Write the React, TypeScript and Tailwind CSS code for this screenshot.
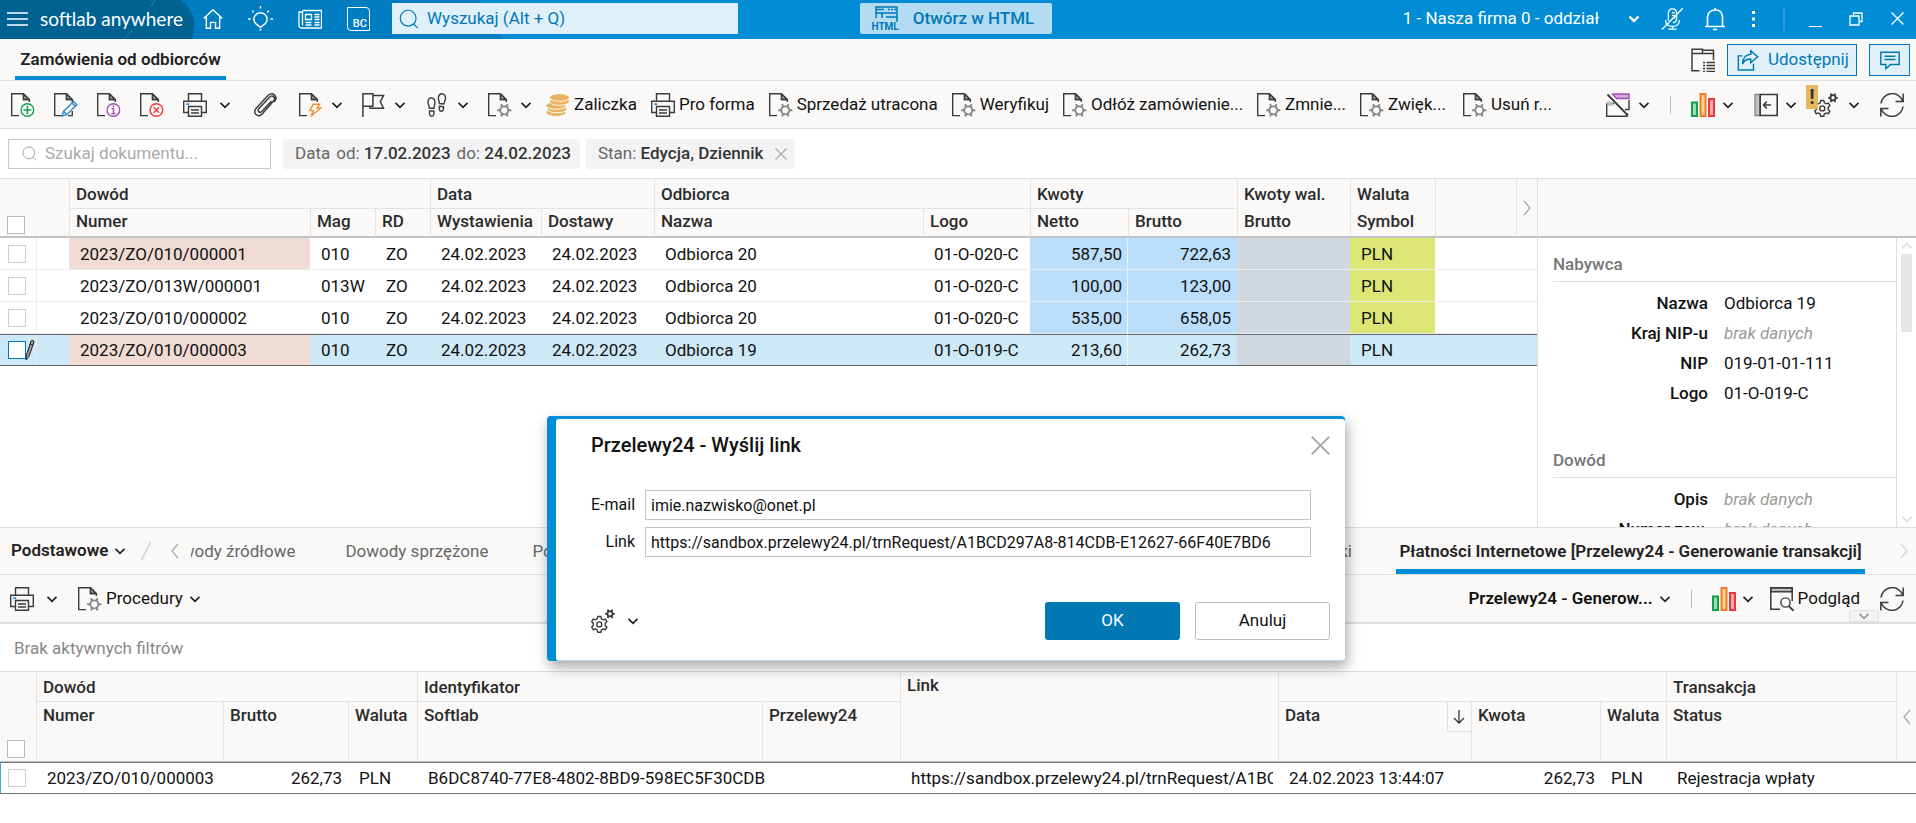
import React, { useState } from "react";

interface IconProps {
  children: React.ReactNode;
  size?: string;
  color?: string;
}

const Icon = ({ children, size = "w-6 h-6", color = "text-[#3b3b3b]" }: IconProps) => (
  <svg
    viewBox="0 0 24 24"
    className={`${size} ${color} shrink-0`}
    fill="none"
    stroke="currentColor"
    strokeWidth="1.4"
    aria-hidden="true"
  >
    {children}
  </svg>
);

const Chevron = ({ color = "text-[#222]" }: { color?: string }) => (
  <svg viewBox="0 0 12 12" className={`w-3 h-3 shrink-0 ${color}`} fill="none" stroke="currentColor" strokeWidth="1.7" aria-hidden="true">
    <path d="M1.5 3.8 6 8.3 10.5 3.8" />
  </svg>
);

const Angle = ({ left }: { left?: boolean }) => (
  <svg viewBox="0 0 8 16" className="w-2 h-4 shrink-0 text-[#aaa]" fill="none" stroke="currentColor" strokeWidth="1.3" aria-hidden="true">
    <path d={left ? "M7 1 1 8 7 15" : "M1 1 7 8 1 15"} />
  </svg>
);

const Page = ({ children }: { children?: React.ReactNode }) => (
  <Icon>
    <path d="M8 22.6H.7V.7H12.5M12.5.7 18.3 6.5V9M12.5.7V6.5H18.3" />
    <path d="M12.5 1 18 6.5H12.5Z" fill="currentColor" fillOpacity=".35" />
    {children}
  </Icon>
);

const DocAdd = () => (
  <Page>
    <circle cx="16.4" cy="17" r="6.3" stroke="#12a150" />
    <path d="M16.4 13v8M12.4 17h8" stroke="#12a150" strokeWidth="1.6" />
  </Page>
);

const DocEdit = () => (
  <Page>
    <path d="M8.2 23 9.5 18.4 19.5 8.4 22.8 11.7 12.8 21.7ZM18 10l3.3 3.3M9.6 18.4l3.2 3.2" stroke="#2a8ad4" />
    <path d="M18.3 18v4.6H14" />
  </Page>
);

const DocInfo = () => (
  <Page>
    <circle cx="16.4" cy="17" r="6.3" stroke="#a04fb0" />
    <path d="M14.6 15.6h1.9v4.8M14.4 20.6h4.2" stroke="#a04fb0" />
    <circle cx="16.4" cy="13.2" r=".9" fill="#a04fb0" stroke="none" />
  </Page>
);

const DocDelete = () => (
  <Page>
    <circle cx="16.4" cy="17" r="6.3" stroke="#e83a3a" />
    <path d="m13.7 14.3 5.4 5.4M19.1 14.3l-5.4 5.4" stroke="#e83a3a" />
  </Page>
);

const DocFlash = () => (
  <Page>
    <path d="M14.2 11.2h6.5L18.2 15h3.4L12 23.2l2.4-5.6H10.8Z" stroke="#f08c33" />
  </Page>
);

const DocGear = () => (
  <Page>
    <circle cx="16.3" cy="17.3" r="4" stroke="#858585" strokeWidth="1.8" />
    <path
      d="M14.2 13.6 13 11.2M18.4 13.6l1.2-2.4M14.2 21 13 23.4M18.4 21l1.2 2.4M12.2 17.3H9.2M20.4 17.3h3"
      stroke="#858585"
      strokeWidth="2"
    />
  </Page>
);

const Printer = () => (
  <Icon>
    <path d="M5.5 8V.7h13V8M5 19.5H.7V8.2h22.6v11.3H19" />
    <path d="M5.5 13.5h13v9.8h-13ZM8 17h8M8 20h8" />
    <path d="M3.2 11.2h3" stroke="#2a8ad4" strokeWidth="1.8" />
  </Icon>
);

const Clip = () => (
  <Icon>
    <path
      d="m18 8.500-9.200 9.900c-2 2.100-5-.6-3-2.700L16.500 4.300c3-3 6.800.6 4 3.700L9.400 20.800c-4.600 4.700-10.600-.8-6.200-5.600L15 2.500c4.600-4.200 10.600 1 6.400 6"
      strokeWidth="1.5"
      strokeLinecap="round"
    />
  </Icon>
);

const Flag = () => (
  <Icon>
    <path d="M.9 24V.7h10v12.6H.9M10.900 2.600h10.600l-3.200 6.200 3.200 6.400H8V13.300" strokeWidth="1.5" />
  </Icon>
);

const Feet = () => (
  <Icon>
    <path d="M6.4 5c2.400 0 3.700 1.900 3.500 4.600-.1 2-.8 3.300-.9 5.600l-4.600.1C4.300 13 3 11.500 3 9 3 6.600 4.200 5 6.400 5Z" />
    <path d="M4.600 18h4.300c.5 3.400-.6 5.300-2.200 5.300S4 21.500 4.600 18Z" />
    <path d="M17 .8c2.300 0 3.700 1.900 3.500 4.600-.1 2.400-1.400 3.400-1.600 5.600l-4.500-.5c0-2-1-3.200-1-5.400C13.400 2.600 14.700.8 17 .8Z" />
    <path d="M14.400 13.200l4.200.5c.1 3.200-1 4.800-2.500 4.600-1.600-.2-2.200-2.200-1.700-5.100Z" />
  </Icon>
);

const Coins = () => (
  <Icon color="text-[#e9b35b]">
    <g fill="currentColor" stroke="#faf9f8" strokeWidth="1">
      <ellipse cx="10" cy="19.500" rx="10" ry="4" />
      <ellipse cx="11" cy="16" rx="10" ry="3.800" />
      <ellipse cx="10" cy="12.500" rx="10" ry="3.800" />
      <ellipse cx="13.500" cy="8.500" rx="10" ry="3.800" />
      <ellipse cx="13.500" cy="4.500" rx="10" ry="3.800" />
    </g>
  </Icon>
);

const Bars = () => (
  <Icon>
    <rect x="1" y="9.500" width="5" height="13.500" fill="#9fdcb4" stroke="#12a150" strokeWidth="2" />
    <rect x="9.500" y="1" width="5" height="22" fill="#fbd38d" stroke="#ee7d2b" strokeWidth="2" />
    <rect x="18" y="6" width="5" height="17" fill="#f4a9b0" stroke="#e83a3a" strokeWidth="2" />
  </Icon>
);

const Refresh = () => (
  <Icon>
    <path d="M1 10.500A11.200 11.200 0 0 1 22.500 7.500M23.200.5v8H15.500M23 13.500A11.200 11.200 0 0 1 1.500 16.500M.8 23.500v-8H8.500" strokeWidth="1.500" />
  </Icon>
);

const Gears = () => (
  <Icon>
    <path d="m6.800 7.500 3 0 .6 2.300 1.700 1 2.300-.7 1.500 2.600-1.700 1.700v2l1.700 1.700-1.500 2.600-2.300-.7-1.700 1-.6 2.300h-3L6.200 21l-1.700-1-2.300.7L.7 18.100l1.700-1.700v-2L.7 12.700l1.500-2.600 2.300.7 1.700-1Z" />
    <circle cx="8.300" cy="15.400" r="2.500" />
    <circle cx="19" cy="4.800" r="2.600" strokeWidth="1.800" />
    <path d="M17.500 2.500 16.700.5M20.500 2.500l.8-2M17.500 7.200l-.8 2M20.500 7.200l.8 2M16.200 4.800h-2M21.800 4.800h2" strokeWidth="1.800" />
  </Icon>
);

const FilterOff = () => (
  <Icon>
    <path d="M6.500 1H23v4.500H10.500Z" fill="#d6a3da" stroke="#a04fb0" />
    <path d="M23 7v9.500H19M.7 10.500V23.300H21V20M.7 10.500H8" />
    <path d="M1 8.500h4l3.500 4H1Z" fill="#bbb" stroke="none" />
    <path d="m1.500 1.500 20.500 21" strokeWidth="1.800" />
  </Icon>
);

const PanelLeft = () => (
  <Icon>
    <path d="M1 1.500h5v21H1Z" fill="#c4c4c4" stroke="#8a8a8a" />
    <path d="M6.200 1.500H23.200v21H6.200ZM9.500 12h7.500M12.800 8.600 9.500 12l3.300 3.400" strokeWidth="1.600" />
  </Icon>
);

const ListWindow = () => (
  <Icon>
    <path d="M8.500 22.800H1V1.200H11.500V5.500H1M11.500 2.200h11V12M11.500 5.500h11" strokeWidth="1.500" />
    <path d="M12 14.500h2M12 17.500h2M12 20.500h2M12 23.500h2M15.500 14.500h8.500M15.500 17.500h8.500M15.500 20.500h8.500M15.500 23.500h8.500" />
  </Icon>
);

const Preview = () => (
  <Icon>
    <path d="M10 22.300H.8V.8h21.400V14" strokeWidth="1.500" />
    <path d="M1 1h21v3.800H1Z" fill="#bbb" stroke="#3b3b3b" />
    <circle cx="15.500" cy="15.500" r="4.600" />
    <path d="m18.700 19 5 5" strokeWidth="1.800" />
  </Icon>
);

const Share = () => (
  <Icon color="text-[#0078b8]" size="w-[22px] h-[22px]">
    <path
      d="M6 7.500H1.500v15.500H18V16M15 2l7.500 6.500L15 15v-4c-4.500-.2-7.300 1.800-9 5.500.2-6.600 3.300-10.300 9-10.700Z"
      strokeWidth="1.600"
    />
  </Icon>
);

const Comment = () => (
  <Icon color="text-[#0078b8]" size="w-[22px] h-[22px]">
    <path d="M2 3.500h20v13.500H12.500L7.500 21.500V17H2ZM6 8h12M6 11.500h12" strokeWidth="1.600" />
  </Icon>
);

const Search = ({ size, color }: { size: string; color: string }) => (
  <Icon size={size} color={color}>
    <circle cx="11" cy="11" r="9.500" />
    <path d="m17.500 18 5 5" />
  </Icon>
);

const Cross = ({ size = "w-3 h-3", color }: { size?: string; color: string }) => (
  <Icon size={size} color={color}>
    <path d="M1 1 23 23M23 1 1 23" strokeWidth="2.400" />
  </Icon>
);

const box = "block appearance-none w-[18px] h-[18px] bg-white border";

const TitleBar = () => (
  <header className="relative flex h-[39px] shrink-0 items-center overflow-hidden bg-[#008dd5] pb-[2px] text-white">
    <svg className="absolute left-0 top-0 h-[39px] w-[640px]" viewBox="0 0 640 39" aria-hidden="true">
      <path d="M0 0H480Q488 20 503 39H0Z" fill="#007dc0" />
      <path d="M0 0H182Q200 19 192 39H0Z" fill="#006193" />
      <path d="m155 0-4 6M132 31l-8 8" stroke="#3d7ea2" />
    </svg>
    <div className="relative flex flex-1 items-center pl-[7px]">
      <button aria-label="Menu" className="mr-3">
        <svg viewBox="0 0 21 14" className="h-[14px] w-[21px]" stroke="white" strokeWidth="1.300" aria-hidden="true">
          <path d="M0 1h21M0 7h21M0 13h21" />
        </svg>
      </button>
      <span className="w-[163px] font-[Lato,sans-serif] text-[19px] leading-none">softlab anywhere</span>
      <nav className="flex items-center gap-[25px] pr-[22px]">
        <button aria-label="Start">
          <Icon size="w-5 h-5" color="text-white">
            <path d="M.8 11.500 12 1l11.200 10.500M4 9v14h5v-7h6v7h5V9" strokeWidth="1.700" />
          </Icon>
        </button>
        <button aria-label="Podpowiedzi">
          <Icon size="w-[25px] h-[25px]" color="text-white">
            <path d="M9.500 18.500a6.300 6.300 0 1 1 5 0L12 20.500ZM12 0v2.500M4 4.500l1.500 1.500M20 4.500 18.500 6M0 12.500h2.500M21.500 12.500H24" />
            <circle cx="12" cy="22.800" r=".9" fill="currentColor" stroke="none" />
          </Icon>
        </button>
        <button aria-label="Aktualności">
          <Icon size="w-[24px] h-[24px]" color="text-white">
            <path d="M4.500 3.500h19v17.500H3.500Q1 21 1 18.500V5h3.500v13.500M7.500 7.500h6v5h-6ZM16.500 7.500h5M16.500 10h5M16.500 12.500h5M7.500 15.500h6M16.500 15.500h5M7.500 18h6M16.500 18h5" strokeWidth="1.300" />
          </Icon>
        </button>
        <button aria-label="BC" className="flex h-6 w-[23px] items-end justify-end rounded-bl-[4px] rounded-tr-[4px] border border-white text-[11px] font-medium leading-none">
          <span className="px-[2px] py-px">BC</span>
        </button>
      </nav>
      <label className="flex h-[31px] w-[346px] items-center gap-2 bg-[#e0f0f9] pl-[7px]">
        <Search size="w-5 h-5" color="text-[#0078b8]" />
        <input
          type="text"
          aria-label="Wyszukaj"
          placeholder="Wyszukaj (Alt + Q)"
          className="w-full bg-transparent text-[17px] text-[#0078b8] outline-none placeholder:text-[#0078b8]"
        />
      </label>
    </div>
    <button className="relative flex h-[31px] w-[192px] items-center gap-[14px] rounded-[2px] bg-[#b3dcf2] pl-3 text-[17px] font-medium text-[#0078b8]">
      <span className="flex flex-col items-center">
        <svg viewBox="0 0 26 16" className="h-4 w-[26px]" fill="none" stroke="currentColor" strokeWidth="1.500" aria-hidden="true">
          <path d="M4 12V1h21v15M4 7h21M10 7v5M14 11h11M4 3.500h8M16 3.500h2M19 3.500h2M22 3.500h2" />
        </svg>
        <span className="text-[10px] font-bold leading-[9px]">HTML</span>
      </span>
      Otwórz w HTML
    </button>
    <div className="flex flex-1 items-center justify-end pr-3">
      <button className="flex items-center gap-[29px] text-[17px]">
        1 - Nasza firma 0 - oddział
        <svg viewBox="0 0 12 12" className="h-3 w-3" fill="none" stroke="currentColor" strokeWidth="2.400" aria-hidden="true">
          <path d="M1.500 3.500 6 8 10.500 3.500" />
        </svg>
      </button>
      <button aria-label="Mikrofon" className="ml-[21px]">
        <Icon size="w-[22px] h-[22px]" color="text-white">
          <path d="M8 14V6q0-5 4.500-5t4.500 5v5q0 5-4 5M5 13q0 7 7.500 7T20 13M12.500 20v3M8 23h9M24 0 1 23.500M12 5h3M12 8h3M12 11h3" />
        </Icon>
      </button>
      <button aria-label="Powiadomienia" className="ml-5">
        <Icon size="w-[24px] h-[24px]" color="text-white">
          <path d="M2 19.500h20M4.500 19.500V10Q5 3.500 12 3t7.500 7v9.500M12 3V1M10 22.500h4" strokeWidth="1.600" />
        </Icon>
      </button>
      <button aria-label="Więcej" className="ml-[14px] w-6">
        <svg viewBox="0 0 24 16" className="h-4 w-6" fill="white" aria-hidden="true">
          <path d="M11 0h3v3h-3ZM11 6.500h3v3h-3ZM11 13h3v3h-3Z" />
        </svg>
      </button>
      <span className="ml-[18px] h-6 w-[2px] bg-[#2b9fdc]" />
      <button aria-label="Minimalizuj" className="ml-6 h-4 w-[13px] border-b border-white" />
      <button aria-label="Przywróć" className="ml-[27px]">
        <svg viewBox="0 0 14 14" className="h-[14px] w-[14px]" fill="none" stroke="white" strokeWidth="1.300" aria-hidden="true">
          <path d="M1 4h9v9H1ZM4.500 4V1H13v8.500H10" />
        </svg>
      </button>
      <button aria-label="Zamknij program" className="ml-7">
        <Cross size="w-[13px] h-[13px]" color="text-white" />
      </button>
    </div>
  </header>
);

const TabBar = () => (
  <div className="flex h-[42px] shrink-0 items-center justify-between border-b border-[#e1e1e1] bg-[#faf9f8] pl-[15px] pr-[6px]">
    <button className="h-full w-[211px] border-b-4 border-[#008dd5] pt-1 text-[17px] font-semibold text-[#222]">
      Zamówienia od odbiorców
    </button>
    <div className="flex items-center gap-3">
      <button aria-label="Lista">
        <ListWindow />
      </button>
      <button className="flex h-8 w-[130px] items-center gap-[9px] border border-[#0078b8] bg-[#e0f0f9] pl-[9px] text-[17px] text-[#0078b8]">
        <Share />
        Udostępnij
      </button>
      <button aria-label="Komentarze" className="flex h-8 w-[41px] items-center justify-center border border-[#0078b8] bg-[#e0f0f9]">
        <Comment />
      </button>
    </div>
  </div>
);

interface Tool {
  name: string;
  icon: React.ReactNode;
  menu?: boolean;
  spacing?: string;
}

const tools: Tool[] = [
  { name: "Dodaj", icon: <DocAdd /> },
  { name: "Edytuj", icon: <DocEdit /> },
  { name: "Informacje", icon: <DocInfo /> },
  { name: "Usuń", icon: <DocDelete /> },
  { name: "Drukuj", icon: <Printer />, menu: true, spacing: "gap-3 pr-[3px]" },
  { name: "Załącz", icon: <Clip />, spacing: "pr-[3px]" },
  { name: "Akcje", icon: <DocFlash />, menu: true },
  { name: "Flaga", icon: <Flag />, menu: true },
  { name: "Ślady", icon: <Feet />, menu: true },
  { name: "Operacje", icon: <DocGear />, menu: true },
];

const actions = [
  { name: "Zaliczka", icon: <Coins />, width: "" },
  { name: "Pro forma", icon: <Printer />, width: "" },
  { name: "Sprzedaż utracona", icon: <DocGear />, width: "" },
  { name: "Weryfikuj", icon: <DocGear />, width: "" },
  { name: "Odłóż zamówienie...", icon: <DocGear />, width: "w-[180px]" },
  { name: "Zmnie...", icon: <DocGear />, width: "w-[89px]" },
  { name: "Zwięk...", icon: <DocGear />, width: "w-[89px]" },
  { name: "Usuń r...", icon: <DocGear />, width: "w-[89px]" },
];

const Toolbar = () => (
  <div className="flex h-12 shrink-0 items-center border-b border-[#dedede] bg-[#faf9f8] pl-[11px] pr-3 text-[17px] text-[#111]">
    <div className="flex items-center gap-[19px]">
      {tools.map((tool) => (
        <button key={tool.name} aria-label={tool.name} className={`flex items-center ${tool.spacing ?? "gap-2"}`}>
          {tool.icon}
          {tool.menu && <Chevron />}
        </button>
      ))}
    </div>
    <div className="ml-[14px] flex flex-1 items-center gap-[14px]">
      {actions.map((action) => (
        <button key={action.name} className={`flex items-center gap-1 whitespace-nowrap ${action.width}`}>
          {action.icon}
          {action.name}
        </button>
      ))}
    </div>
    <div className="flex items-center gap-5">
      <button aria-label="Wyłącz filtr" className="flex items-center gap-2">
        <FilterOff />
        <Chevron />
      </button>
      <span className="h-[18px] w-px bg-[#bbb]" />
      <button aria-label="Wykresy" className="flex items-center gap-[7px]">
        <Bars />
        <Chevron />
      </button>
      <button aria-label="Panel" className="flex items-center gap-[7px]">
        <PanelLeft />
        <Chevron />
      </button>
      <button aria-label="Ustawienia" className="relative -ml-[3px] flex items-center gap-[10px]">
        <Gears />
        <Chevron />
        <span className="absolute -left-2 -top-2 flex h-6 w-3 items-center justify-center bg-[#e5b85c] text-[20px] font-bold leading-none text-[#333]">
          !
        </span>
      </button>
      <button aria-label="Odśwież">
        <Refresh />
      </button>
    </div>
  </div>
);

const FilterRow = () => {
  const [query, setQuery] = useState("");

  return (
    <div className="flex h-[50px] shrink-0 items-center gap-[6px] border-b border-[#dedede] bg-white pl-2 text-[17px] text-[#666]">
      <label className="mr-[6px] flex h-[30px] w-[263px] items-center gap-2 border border-[#c8c8c8] pl-[13px]">
        <Search size="w-[15px] h-[15px]" color="text-[#999]" />
        <input
          type="text"
          aria-label="Szukaj dokumentu"
          placeholder="Szukaj dokumentu..."
          value={query}
          onChange={(event) => setQuery(event.target.value)}
          className="w-full bg-transparent outline-none placeholder:text-[#aaa]"
        />
      </label>
      <button className="flex h-[30px] items-center gap-[6px] rounded-[3px] bg-[#f3f3f3] pl-3 pr-[9px]">
        <span>Data</span>
        <span>
          od: <b className="font-medium text-[#333]">17.02.2023</b>
        </span>
        <span>
          do: <b className="font-medium text-[#333]">24.02.2023</b>
        </span>
      </button>
      <button className="flex h-[30px] items-center gap-3 rounded-[3px] bg-[#f3f3f3] pl-3 pr-2">
        <span>
          Stan: <b className="font-medium text-[#333]">Edycja, Dziennik</b>
        </span>
        <Cross color="text-[#aaa]" />
      </button>
    </div>
  );
};

interface Order {
  number: string;
  store: string;
  client: string;
  logo: string;
  net: string;
  gross: string;
  marked: boolean;
}

const orders: Order[] = [
  { number: "2023/ZO/010/000001", store: "010", client: "Odbiorca 20", logo: "01-O-020-C", net: "587,50", gross: "722,63", marked: true },
  { number: "2023/ZO/013W/000001", store: "013W", client: "Odbiorca 20", logo: "01-O-020-C", net: "100,00", gross: "123,00", marked: false },
  { number: "2023/ZO/010/000002", store: "010", client: "Odbiorca 20", logo: "01-O-020-C", net: "535,00", gross: "658,05", marked: false },
  { number: "2023/ZO/010/000003", store: "010", client: "Odbiorca 19", logo: "01-O-019-C", net: "213,60", gross: "262,73", marked: true },
];

const groupHead = "border-b border-l border-[#e3e3e3] pl-[6px] font-medium";
const openHead = "border-l border-[#e3e3e3] pl-[6px] font-medium";
const subHead = "border-b-2 border-b-[#c2c2c2] border-l border-l-[#e3e3e3] pl-[6px] pb-1 font-medium";

const OrdersTable = () => {
  const [selected, setSelected] = useState(3);

  return (
    <table className="w-full table-fixed border-separate border-spacing-0 text-left text-[17px] leading-5 text-[#111]">
      <colgroup>
        <col className="w-[36px]" />
        <col className="w-[33px]" />
        <col className="w-[241px]" />
        <col className="w-[65px]" />
        <col className="w-[55px]" />
        <col className="w-[111px]" />
        <col className="w-[113px]" />
        <col />
        <col className="w-[107px]" />
        <col className="w-[98px]" />
        <col className="w-[109px]" />
        <col className="w-[113px]" />
        <col className="w-[85px]" />
        <col className="w-[81px]" />
        <col className="w-[21px]" />
      </colgroup>
      <thead className="bg-[#faf9f8] text-[#2b2b2b]">
        <tr className="h-[30px]">
          <th rowSpan={2} colSpan={2} className="border-b-2 border-[#c2c2c2] pb-[2px] pl-[7px] align-bottom">
            <input type="checkbox" aria-label="Zaznacz wszystkie" className={`${box} border-[#bbb]`} />
          </th>
          <th colSpan={3} className={groupHead}>Dowód</th>
          <th colSpan={2} className={groupHead}>Data</th>
          <th colSpan={2} className={groupHead}>Odbiorca</th>
          <th colSpan={2} className={groupHead}>Kwoty</th>
          <th className={openHead}>Kwoty wal.</th>
          <th className={openHead}>Waluta</th>
          <th rowSpan={2} className={subHead} />
          <th rowSpan={2} className="border-b-2 border-b-[#c2c2c2] border-l border-l-[#e3e3e3]">
            <button aria-label="Dalej" className="flex w-full justify-center">
              <Angle />
            </button>
          </th>
        </tr>
        <tr className="h-[29px]">
          <th className={subHead}>Numer</th>
          <th className={subHead}>Mag</th>
          <th className={subHead}>RD</th>
          <th className={subHead}>Wystawienia</th>
          <th className={subHead}>Dostawy</th>
          <th className={subHead}>Nazwa</th>
          <th className={subHead}>Logo</th>
          <th className={subHead}>Netto</th>
          <th className={subHead}>Brutto</th>
          <th className={subHead}>Brutto</th>
          <th className={subHead}>Symbol</th>
        </tr>
      </thead>
      <tbody>
        {orders.map((order, index) => {
          const active = index === selected;
          const edge = active ? "border-y border-[#666]" : "border-b border-[#ececec]";
          const amount = active ? "" : "bg-[#bbdefb]";
          return (
            <tr key={order.number} onClick={() => setSelected(index)} className={active ? "h-8 bg-[#cde8f6]" : "h-8"}>
              <td className={`${edge} pl-2`}>
                <span className="relative block">
                  <input
                    type="checkbox"
                    aria-label={order.number}
                    className={`${box} ${active ? "border-[#0078b8]" : "border-[#ccc]"}`}
                  />
                  {active && (
                    <svg viewBox="0 0 10 22" className="absolute -top-[2px] left-[17px] h-[22px] w-[10px]" fill="#999" stroke="#222" aria-hidden="true">
                      <path d="M6 2Q8.500 0 9 3L4 17.500 1 21 1.500 16ZM5 5l3 1" />
                    </svg>
                  )}
                </span>
              </td>
              <td className={`${edge} relative`}>
                <span className="absolute inset-y-0 left-0 w-px bg-[#ececec]" />
              </td>
              <td className={`${edge} pl-[11px] ${order.marked ? "bg-[#f0dbd5]" : ""}`}>{order.number}</td>
              <td className={`${edge} pl-[11px]`}>{order.store}</td>
              <td className={`${edge} pl-[11px]`}>ZO</td>
              <td className={`${edge} pl-[11px]`}>24.02.2023</td>
              <td className={`${edge} pl-[11px]`}>24.02.2023</td>
              <td className={`${edge} pl-[11px]`}>{order.client}</td>
              <td className={`${edge} pl-[11px]`}>{order.logo}</td>
              <td className={`${edge} border-r border-r-white/60 pr-[5px] text-right ${amount}`}>{order.net}</td>
              <td className={`${edge} pr-[6px] text-right ${amount}`}>{order.gross}</td>
              <td className={`${edge} bg-[#d0d8df]`} />
              <td className={`${edge} pl-[11px] ${active ? "" : "bg-[#dce775]"}`}>PLN</td>
              <td colSpan={2} className={edge} />
            </tr>
          );
        })}
      </tbody>
    </table>
  );
};

const details = [
  {
    title: "Nabywca",
    rows: [
      ["Nazwa", "Odbiorca 19"],
      ["Kraj NIP-u", ""],
      ["NIP", "019-01-01-111"],
      ["Logo", "01-O-019-C"],
    ],
  },
  {
    title: "Dowód",
    rows: [
      ["Opis", ""],
      ["Numer zew.", ""],
    ],
  },
];

const DetailsPanel = () => (
  <aside className="flex w-[379px] shrink-0 flex-col border-l border-[#dedede] text-[17px] text-[#111]">
    <div className="h-[59px] shrink-0 border-b-2 border-[#c2c2c2] bg-[#faf9f8]" />
    <div className="flex min-h-0 flex-1">
      <div className="flex flex-1 flex-col gap-[26px] overflow-hidden pl-[15px]">
        {details.map((section) => (
          <section key={section.title} className="shrink-0">
            <h2 className="h-[44px] border-b border-[#dedede] pt-4 leading-5 font-medium text-[#777]">{section.title}</h2>
            <dl className="grid grid-cols-[155px_1fr] gap-x-4 pt-[6px] leading-[30px]">
              {section.rows.map(([label, value]) => (
                <React.Fragment key={label}>
                  <dt className="text-right font-medium">{label}</dt>
                  <dd>{value || <i className="text-[#999]">brak danych</i>}</dd>
                </React.Fragment>
              ))}
            </dl>
          </section>
        ))}
      </div>
      <div className="flex w-5 flex-col items-center border-l border-[#dedede] py-[2px]">
        <span className="rotate-180">
          <Chevron color="text-[#ddd]" />
        </span>
        <span className="mt-[2px] h-[78px] w-[11px] bg-[#e6e6e6]" />
        <span className="mt-auto">
          <Chevron color="text-[#ddd]" />
        </span>
      </div>
    </div>
  </aside>
);

const BottomTabs = () => (
  <div className="flex h-[48px] shrink-0 items-center border-y border-[#dedede] bg-[#faf9f8] pl-[11px] pr-2 text-[17px] text-[#666]">
    <button className="flex items-center gap-[6px] font-semibold text-[#222]">
      Podstawowe
      <Chevron />
    </button>
    <svg viewBox="0 0 10 18" className="ml-[15px] h-[18px] w-[10px]" stroke="#ccc" strokeWidth="1.300" aria-hidden="true">
      <path d="M9.500 0 .5 18" />
    </svg>
    <button aria-label="Poprzednie" className="ml-5 mr-3">
      <Angle left />
    </button>
    <nav className="flex h-full flex-1 items-center whitespace-nowrap">
      <button className="flex w-[104px] justify-end overflow-hidden pt-[2px]">Dowody źródłowe</button>
      <button className="ml-[50px] pt-[2px]">Dowody sprzężone</button>
      <button className="ml-[44px] pt-[2px]">Pozycje</button>
      <button className="ml-auto mr-[44px] pt-[2px]">Załączniki</button>
      <button className="h-full w-[469px] border-b-[5px] border-[#008dd5] pt-[6px] font-semibold text-[#222]">
        Płatności Internetowe [Przelewy24 - Generowanie transakcji]
      </button>
    </nav>
    <button aria-label="Następne" className="ml-[35px] opacity-40">
      <Angle />
    </button>
  </div>
);

const BottomToolbar = () => (
  <div className="relative flex h-[49px] shrink-0 items-center justify-between border-b-2 border-[#dedede] bg-[#faf9f8] pl-[10px] pr-3 text-[17px] text-[#111]">
    <div className="flex items-center gap-5">
      <button aria-label="Drukuj" className="flex items-center gap-3">
        <Printer />
        <Chevron />
      </button>
      <button className="flex items-center gap-1">
        <DocGear />
        Procedury
        <span className="pl-[2px]">
          <Chevron />
        </span>
      </button>
    </div>
    <div className="flex items-center gap-5">
      <button className="flex items-center gap-[6px] font-semibold">
        Przelewy24 - Generow...
        <Chevron />
      </button>
      <span className="h-[18px] w-px bg-[#bbb]" />
      <button aria-label="Wykresy" className="flex items-center gap-[6px]">
        <Bars />
        <Chevron />
      </button>
      <button className="-ml-1 flex items-center gap-1">
        <Preview />
        Podgląd
      </button>
      <button aria-label="Odśwież">
        <Refresh />
      </button>
    </div>
    <button aria-label="Zwiń" className="absolute bottom-0 right-[37px] flex h-3 w-[30px] items-center justify-center rounded-t-[3px] border border-[#dedede] bg-[#f3f3f3]">
      <Chevron color="text-[#999]" />
    </button>
  </div>
);

const payHead = "border-b border-[#c2c2c2] border-l border-l-[#e3e3e3] pl-[6px] pt-[3px] align-top font-medium";
const payCell = "border-y border-[#6b7478] pl-[11px]";

const PaymentsTable = () => (
  <table className="w-full table-fixed border-separate border-spacing-0 text-left text-[17px] leading-5 text-[#111]">
    <colgroup>
      <col className="w-[36px]" />
      <col className="w-[187px]" />
      <col className="w-[125px]" />
      <col className="w-[69px]" />
      <col className="w-[345px]" />
      <col className="w-[138px]" />
      <col />
      <col className="w-[193px]" />
      <col className="w-[129px]" />
      <col className="w-[66px]" />
      <col className="w-[230px]" />
      <col className="w-[20px]" />
    </colgroup>
    <thead className="bg-[#faf9f8] text-[#2b2b2b]">
      <tr className="h-[30px]">
        <th rowSpan={2} className="border-b border-[#c2c2c2] pb-[3px] pl-[7px] align-bottom">
          <input type="checkbox" aria-label="Zaznacz wszystkie płatności" className={`${box} border-[#bbb]`} />
        </th>
        <th colSpan={3} className={groupHead}>Dowód</th>
        <th colSpan={2} className={groupHead}>Identyfikator</th>
        <th rowSpan={2} className={payHead}>Link</th>
        <th colSpan={3} className={groupHead} />
        <th className={groupHead}>Transakcja</th>
        <th rowSpan={2} className="border-b border-l border-[#c2c2c2] border-l-[#e3e3e3]">
          <button aria-label="Wstecz" className="flex w-full justify-center">
            <Angle left />
          </button>
        </th>
      </tr>
      <tr className="h-[60px]">
        <th className={payHead}>Numer</th>
        <th className={payHead}>Brutto</th>
        <th className={payHead}>Waluta</th>
        <th className={payHead}>Softlab</th>
        <th className={payHead}>Przelewy24</th>
        <th className="border-b border-l border-[#c2c2c2] border-l-[#e3e3e3] pl-[6px] align-top font-medium">
          <div className="flex items-start justify-between">
            <span className="pt-[3px]">Data</span>
            <button aria-label="Sortuj" className="flex h-[30px] w-6 items-center justify-center border-b border-l border-[#dedede]">
              <svg viewBox="0 0 12 14" className="h-[14px] w-3" fill="none" stroke="#333" strokeWidth="1.300" aria-hidden="true">
                <path d="M6 0v13M1 8l5 5 5-5" />
              </svg>
            </button>
          </div>
        </th>
        <th className={payHead}>Kwota</th>
        <th className={payHead}>Waluta</th>
        <th className={payHead}>Status</th>
      </tr>
    </thead>
    <tbody>
      <tr className="h-8 whitespace-nowrap">
        <td className="border-y border-l border-[#6b7478] border-l-[#4ba3d0] pl-[7px]">
          <input type="checkbox" aria-label="Płatność 2023/ZO/010/000003" className={`${box} border-[#ccc]`} />
        </td>
        <td className={payCell}>2023/ZO/010/000003</td>
        <td className={`${payCell} pr-[6px] text-right`}>262,73</td>
        <td className={payCell}>PLN</td>
        <td className={payCell}>B6DC8740-77E8-4802-8BD9-598EC5F30CDB</td>
        <td className={payCell} />
        <td className={`${payCell} pr-[5px]`}>
          <div className="overflow-hidden">https://sandbox.przelewy24.pl/trnRequest/A1BCD297A8</div>
        </td>
        <td className={payCell}>24.02.2023 13:44:07</td>
        <td className={`${payCell} pr-[5px] text-right`}>262,73</td>
        <td className={payCell}>PLN</td>
        <td className={payCell}>Rejestracja wpłaty</td>
        <td className="border-y border-[#6b7478]" />
      </tr>
    </tbody>
  </table>
);

interface LinkForm {
  email: string;
  link: string;
}

const initialForm: LinkForm = {
  email: "imie.nazwisko@onet.pl",
  link: "https://sandbox.przelewy24.pl/trnRequest/A1BCD297A8-814CDB-E12627-66F40E7BD6",
};

const SendLinkDialog = ({ onClose }: { onClose: () => void }) => {
  const [form, setForm] = useState<LinkForm>(initialForm);

  const handleOnChange = (event: React.ChangeEvent<HTMLInputElement>) => {
    const { name, value } = event.target;
    setForm({ ...form, [name]: value });
  };

  const handleSubmit = (event: React.FormEvent<HTMLFormElement>) => {
    event.preventDefault();
    onClose();
  };

  return (
    <div className="pointer-events-none absolute inset-0 flex items-start justify-center pr-6 pt-[416px]">
      <form
        role="dialog"
        aria-labelledby="dialog-title"
        onSubmit={handleSubmit}
        className="pointer-events-auto w-[798px] rounded-[4px] bg-[#008dd5] pl-[9px] pt-[3px] text-[17px] text-[#111] shadow-[2px_6px_14px_rgba(0,0,0,0.35)]"
      >
        <div className="rounded-l-[3px] rounded-r-[3px] border-b border-[#b5dcec] bg-white pb-5 pl-[35px] pr-[15px] pt-3">
          <div className="flex items-center justify-between">
            <h1 id="dialog-title" className="text-[20px] font-medium leading-7">
              Przelewy24 - Wyślij link
            </h1>
            <button type="button" aria-label="Zamknij" onClick={onClose}>
              <Cross size="w-[19px] h-[19px]" color="text-[#aaa]" />
            </button>
          </div>
          <div className="mt-[31px] grid grid-cols-[44px_1fr] items-center gap-x-[10px] gap-y-[7px] whitespace-nowrap pr-[19px] text-base">
            <label htmlFor="email" className="text-right">
              E-mail
            </label>
            <input
              id="email"
              name="email"
              type="text"
              value={form.email}
              onChange={handleOnChange}
              className="h-[30px] w-full border border-[#c4c4c4] px-[5px] outline-none"
            />
            <label htmlFor="link" className="text-right">
              Link
            </label>
            <input
              id="link"
              name="link"
              type="text"
              value={form.link}
              onChange={handleOnChange}
              className="h-[30px] w-full border border-[#c4c4c4] px-[5px] outline-none"
            />
          </div>
          <div className="mt-[45px] flex items-center gap-[15px]">
            <button type="button" aria-label="Opcje" className="mr-auto flex items-center gap-3">
              <Gears />
              <Chevron />
            </button>
            <button type="submit" className="h-[38px] w-[135px] rounded-[3px] bg-[#0078b3] text-white">
              OK
            </button>
            <button type="button" onClick={onClose} className="h-[38px] w-[135px] rounded-[3px] border border-[#bbb] bg-white">
              Anuluj
            </button>
          </div>
        </div>
      </form>
    </div>
  );
};

export default function App() {
  const [dialogOpen, setDialogOpen] = useState(true);

  return (
    <div className="relative flex h-screen flex-col overflow-hidden bg-white font-[Roboto,sans-serif]">
      <TitleBar />
      <TabBar />
      <Toolbar />
      <FilterRow />
      <main className="flex min-h-0 flex-1">
        <div className="min-w-0 flex-1">
          <OrdersTable />
        </div>
        <DetailsPanel />
      </main>
      <section className="flex h-[296px] shrink-0 flex-col">
        <BottomTabs />
        <BottomToolbar />
        <p className="h-[48px] shrink-0 border-b border-[#dedede] pl-[14px] text-[17px] leading-[48px] text-[#888]">
          Brak aktywnych filtrów
        </p>
        <PaymentsTable />
      </section>
      {dialogOpen && <SendLinkDialog onClose={() => setDialogOpen(false)} />}
    </div>
  );
}
